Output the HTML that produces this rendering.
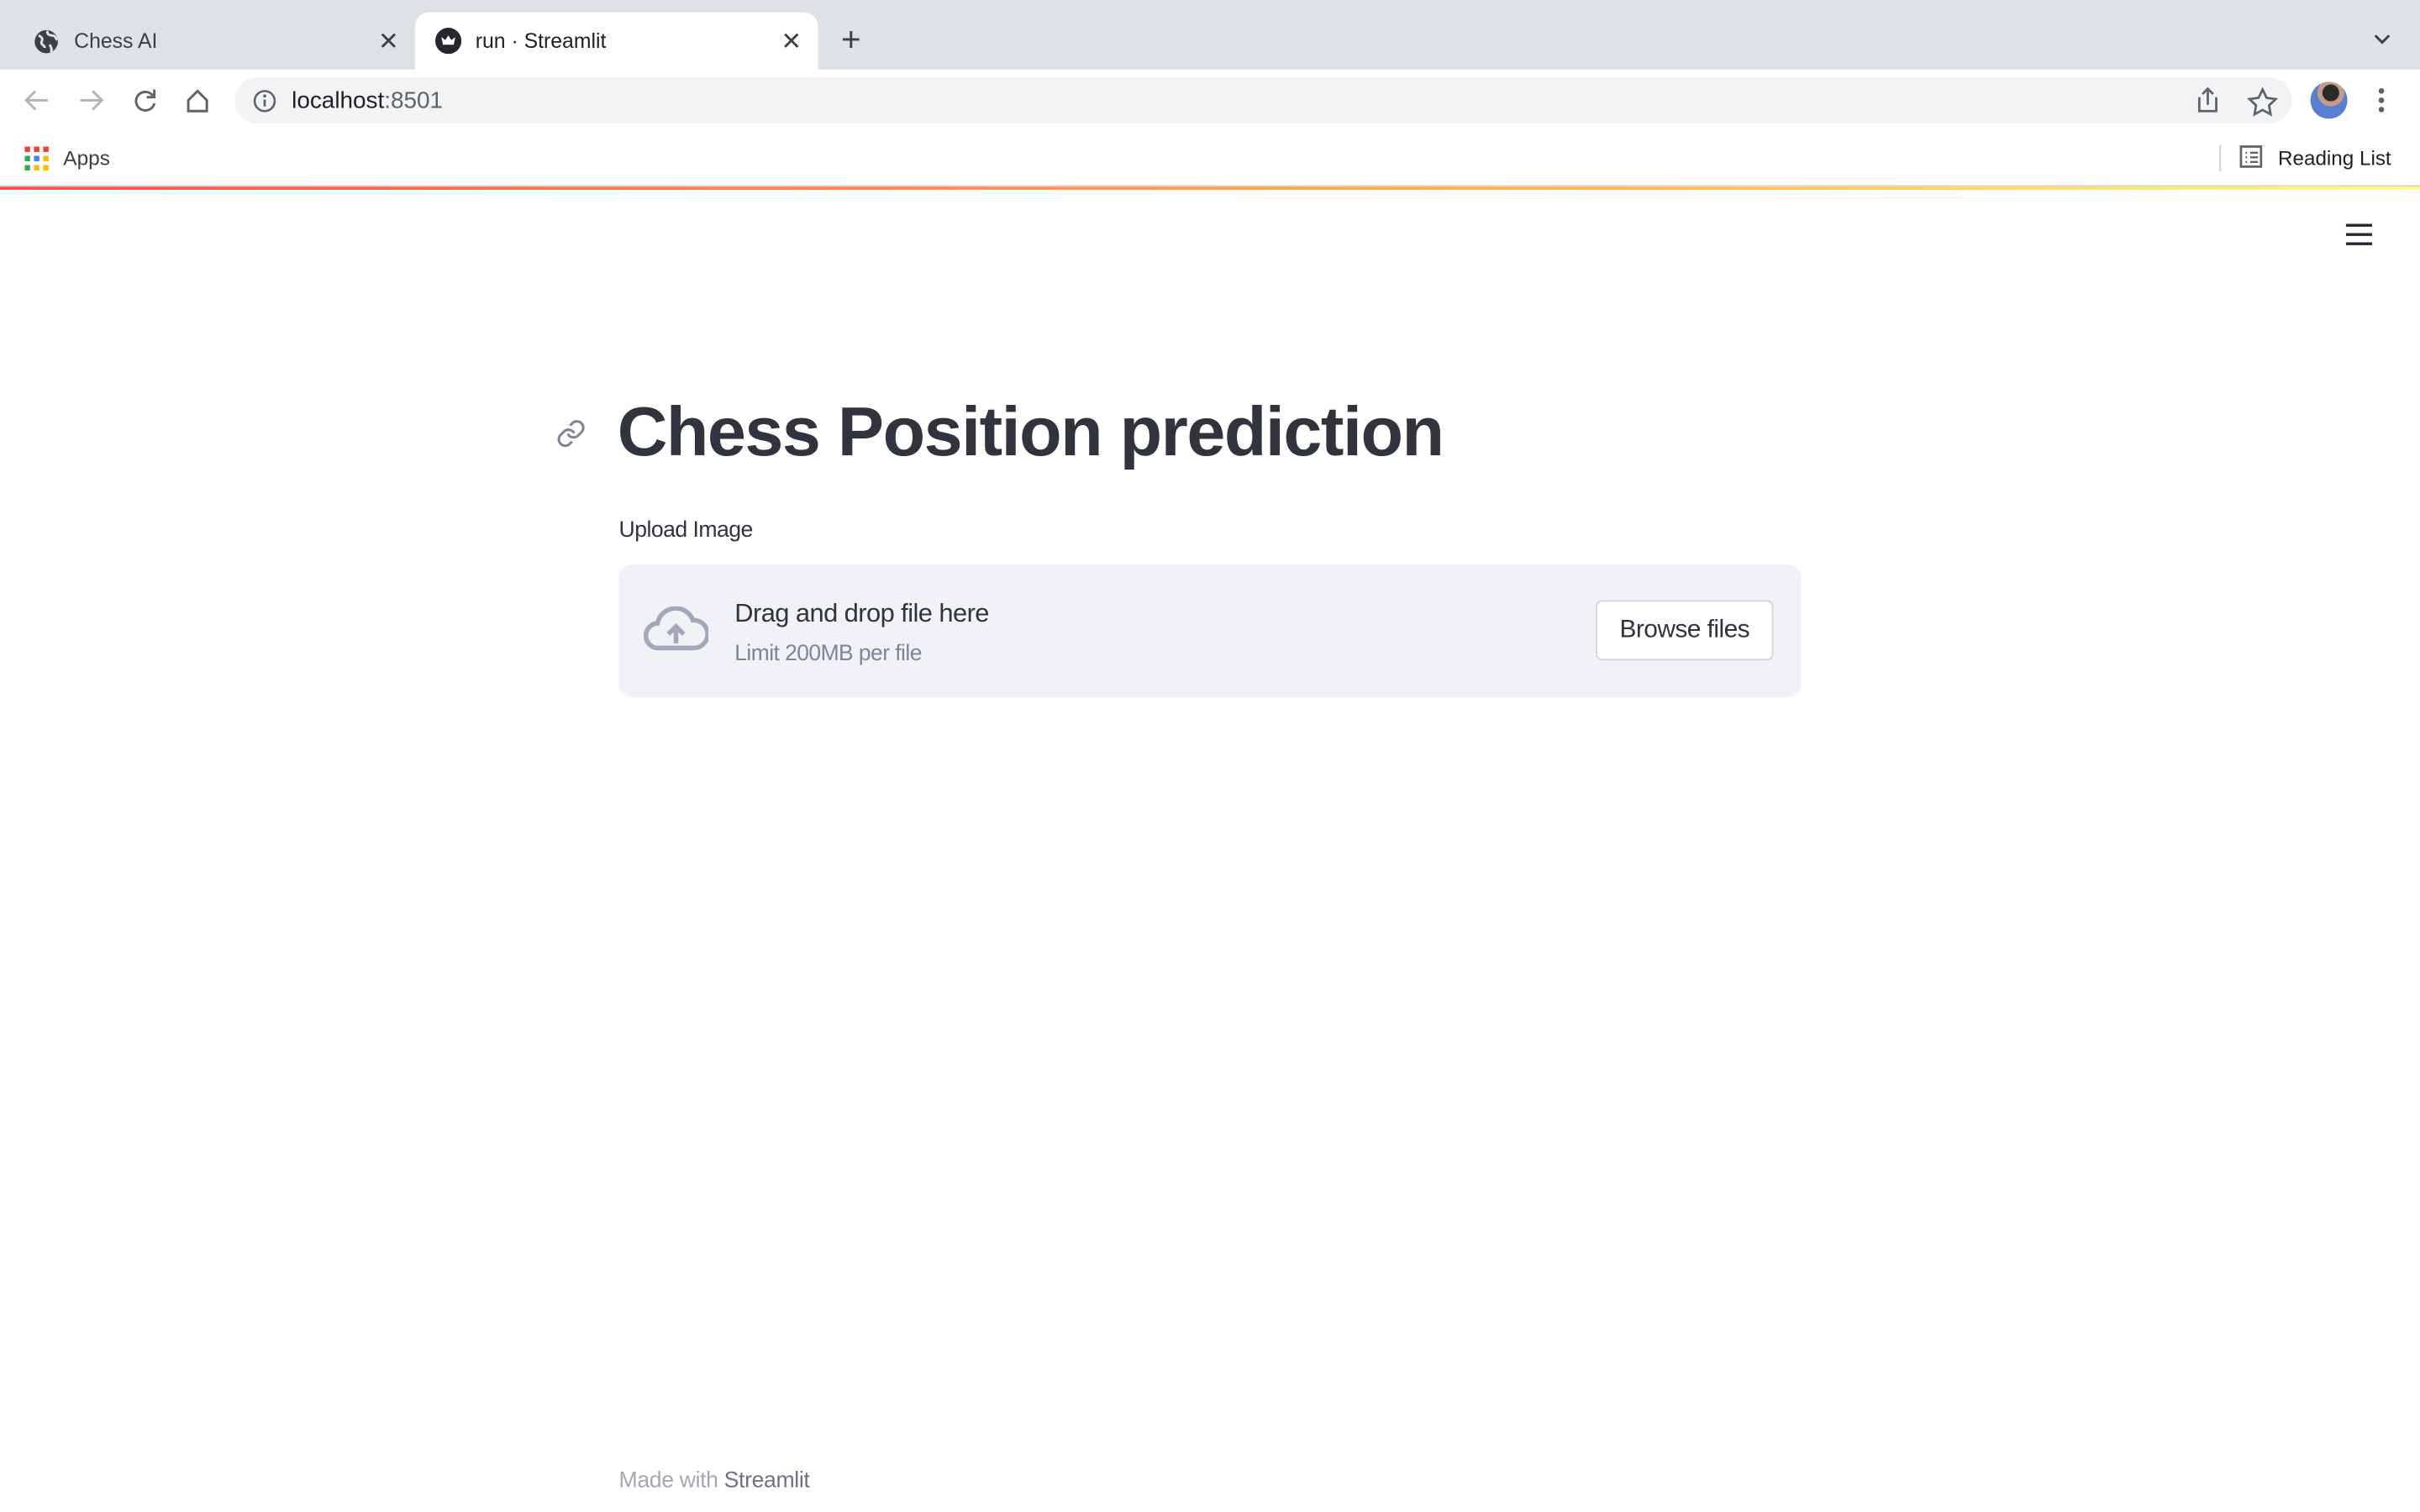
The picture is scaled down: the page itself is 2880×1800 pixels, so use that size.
<!DOCTYPE html>
<html><head><meta charset="utf-8"><style>
html,body{margin:0;padding:0;width:2880px;height:1800px;overflow:hidden;background:#fff}
#s{position:absolute;left:0;top:0;width:1568px;height:980px;transform:scale(1.83673);transform-origin:0 0;font-family:"Liberation Sans",sans-serif;}
.a{position:absolute}
</style></head><body><div id="s">
<div class="a" style="left:0;top:0;width:1568px;height:45px;background:#dee1e6"></div>
<div class="a" style="left:269px;top:8px;width:261px;height:40px;background:#fff;border-radius:9px 9px 0 0"></div>
<svg class="a" style="left:22px;top:19px" width="16" height="16" viewBox="0 0 16 16"><circle cx="8" cy="8" r="7.5" fill="#3c4043"/><path d="M3 4c2 1 3 2 2 4s2 2 2 4M9 1c-1 2 1 3 3 3s2 2 3 3M10 10c1 1 2 3 1 5" stroke="#dee1e6" stroke-width="1.6" fill="none"/></svg>
<div class="a" style="left:48px;top:19px;font-size:13.5px;color:#3c4043">Chess AI</div>
<div class="a" style="left:245px;top:17px;font-size:16px;color:#3c4043">✕</div>
<svg class="a" style="left:282px;top:18px" width="17" height="17" viewBox="0 0 17 17"><circle cx="8.5" cy="8.5" r="8.5" fill="#262730"/><path d="M4 6l2.5 2L8.5 5l2 3L13 6l-1 5H5z" fill="#fff"/></svg>
<div class="a" style="left:308px;top:19px;font-size:13.5px;color:#202124">run · Streamlit</div>
<div class="a" style="left:506px;top:17px;font-size:16px;color:#3c4043">✕</div>
<div class="a" style="left:545px;top:13px;font-size:22px;color:#3c4043">+</div>
<svg class="a" style="left:1537px;top:21px" width="13" height="10"><path d="M2 2l4.5 4.5L11 2" stroke="#3c4043" stroke-width="1.6" fill="none"/></svg>
<svg class="a" style="left:0;top:55px" width="150" height="22" viewBox="0 0 150 22"><g fill="none" stroke-width="1.6"><path d="M31 10H17M23 4l-6 6 6 6" stroke="#b0b3b7"/><path d="M52 10h14M60 4l6 6-6 6" stroke="#b0b3b7"/><path d="M99 7a6 6 0 1 0 1 5M100 3v5h-5" stroke="#5f6368"/><path d="M128 4l-6 6v7h12v-7z" stroke="#5f6368"/></g></svg>
<div class="a" style="left:152px;top:50px;width:1333px;height:30px;background:#f1f3f4;border-radius:15px"></div>
<svg class="a" style="left:164px;top:58px" width="15" height="15"><circle cx="7.5" cy="7.5" r="6.5" stroke="#5f6368" stroke-width="1.4" fill="none"/><path d="M7.5 6.5v4.5" stroke="#5f6368" stroke-width="1.5"/><circle cx="7.5" cy="4.2" r="1" fill="#5f6368"/></svg>
<div class="a" style="left:189px;top:57px;font-size:15.2px;color:#202124">localhost<span style="color:#5f6368">:8501</span></div>
<svg class="a" style="left:1422px;top:56px" width="56" height="20"><path d="M3 7v9h11V7M8.5 12V2M5 5l3.5-3.5L12 5" stroke="#5f6368" stroke-width="1.5" fill="none"/><path d="M44 2l2.6 5.4 5.9.8-4.3 4.1 1 5.8-5.2-2.8-5.2 2.8 1-5.8-4.3-4.1 5.9-.8z" stroke="#5f6368" stroke-width="1.5" fill="none"/></svg>
<div class="a" style="left:1497px;top:53px;width:24px;height:24px;border-radius:50%;background:radial-gradient(circle at 55% 30%,#2a2a2a 0 25%,#c79b88 26% 40%,#5b7fd0 41%)"></div>
<svg class="a" style="left:1539px;top:56px" width="8" height="20"><circle cx="4" cy="3" r="1.8" fill="#5f6368"/><circle cx="4" cy="9" r="1.8" fill="#5f6368"/><circle cx="4" cy="15" r="1.8" fill="#5f6368"/></svg>
<svg class="a" style="left:16px;top:95px" width="16" height="16"><g><rect x="0" y="0" width="3.5" height="3.5" fill="#ea4335"/><rect x="6" y="0" width="3.5" height="3.5" fill="#ea4335"/><rect x="12" y="0" width="3.5" height="3.5" fill="#ea4335"/><rect x="0" y="6" width="3.5" height="3.5" fill="#34a853"/><rect x="6" y="6" width="3.5" height="3.5" fill="#4285f4"/><rect x="12" y="6" width="3.5" height="3.5" fill="#fbbc04"/><rect x="0" y="12" width="3.5" height="3.5" fill="#34a853"/><rect x="6" y="12" width="3.5" height="3.5" fill="#fbbc04"/><rect x="12" y="12" width="3.5" height="3.5" fill="#fbbc04"/></g></svg>
<div class="a" style="left:41px;top:95px;font-size:13.3px;color:#3c4043">Apps</div>
<div class="a" style="left:1438px;top:94px;width:1px;height:17px;background:#ccc"></div>
<svg class="a" style="left:1451px;top:94px" width="16" height="16"><rect x="1" y="1" width="13" height="13" stroke="#5f6368" stroke-width="1.5" fill="none"/><path d="M4 5h1M7 5h5M4 8h1M7 8h5M4 11h1M7 11h5" stroke="#5f6368" stroke-width="1.3"/></svg>
<div class="a" style="left:1476px;top:95px;font-size:13.2px;color:#202124">Reading List</div>
<div class="a" style="left:0;top:120px;width:1568px;height:1px;background:#d5d5d5"></div>
<div class="a" style="left:0;top:121px;width:1568px;height:2px;background:linear-gradient(90deg,#ff4b4b,#ffbd45 70%,#fffd80)"></div>
<svg class="a" style="left:1520px;top:145px" width="17" height="14"><path d="M0 1h17M0 7h17M0 13h17" stroke="#262730" stroke-width="1.8"/></svg>
<svg class="a" style="left:360px;top:271px" width="20" height="20" viewBox="0 0 24 24"><path d="M10 13a5 5 0 0 0 7.5.5l3-3a5 5 0 0 0-7-7l-1.7 1.7M14 11a5 5 0 0 0-7.5-.5l-3 3a5 5 0 0 0 7 7l1.7-1.7" stroke="#808495" stroke-width="2" fill="none" stroke-linecap="round"/></svg>
<div class="a" style="left:400px;top:254px;font-size:45px;font-weight:bold;color:#31333f;letter-spacing:-0.8px;white-space:nowrap">Chess Position prediction</div>
<div class="a" style="left:401px;top:336px;font-size:14.5px;color:#31333f;letter-spacing:-0.3px">Upload Image</div>
<div class="a" style="left:401px;top:366px;width:766px;height:86px;background:#f0f2f6;border-radius:8px"></div>
<svg class="a" style="left:417px;top:393px" width="42" height="30" viewBox="0 0 42 30"><path d="M10 27a8 8 0 0 1-1-16A12 12 0 0 1 32 9a9 9 0 0 1 1 18z" stroke="#a3a8b8" stroke-width="3" fill="none"/><path d="M21 24V13M16 18l5-5 5 5" stroke="#a3a8b8" stroke-width="3" fill="none"/></svg>
<div class="a" style="left:476px;top:388px;font-size:16.8px;color:#31333f;letter-spacing:-0.3px">Drag and drop file here</div>
<div class="a" style="left:476px;top:416px;font-size:14.4px;color:#808495;letter-spacing:-0.3px">Limit 200MB per file</div>
<div class="a" style="left:1034px;top:389px;width:115px;height:39px;background:#fff;border:1px solid #d6d6d9;border-radius:4px;box-sizing:border-box;font-size:16.3px;color:#31333f;text-align:center;line-height:37px;letter-spacing:-0.3px">Browse files</div>
<div class="a" style="left:401px;top:952px;font-size:14.5px;color:#a3a8b4;letter-spacing:-0.2px">Made with <span style="color:#6f7282">Streamlit</span></div>
</div></body></html>
